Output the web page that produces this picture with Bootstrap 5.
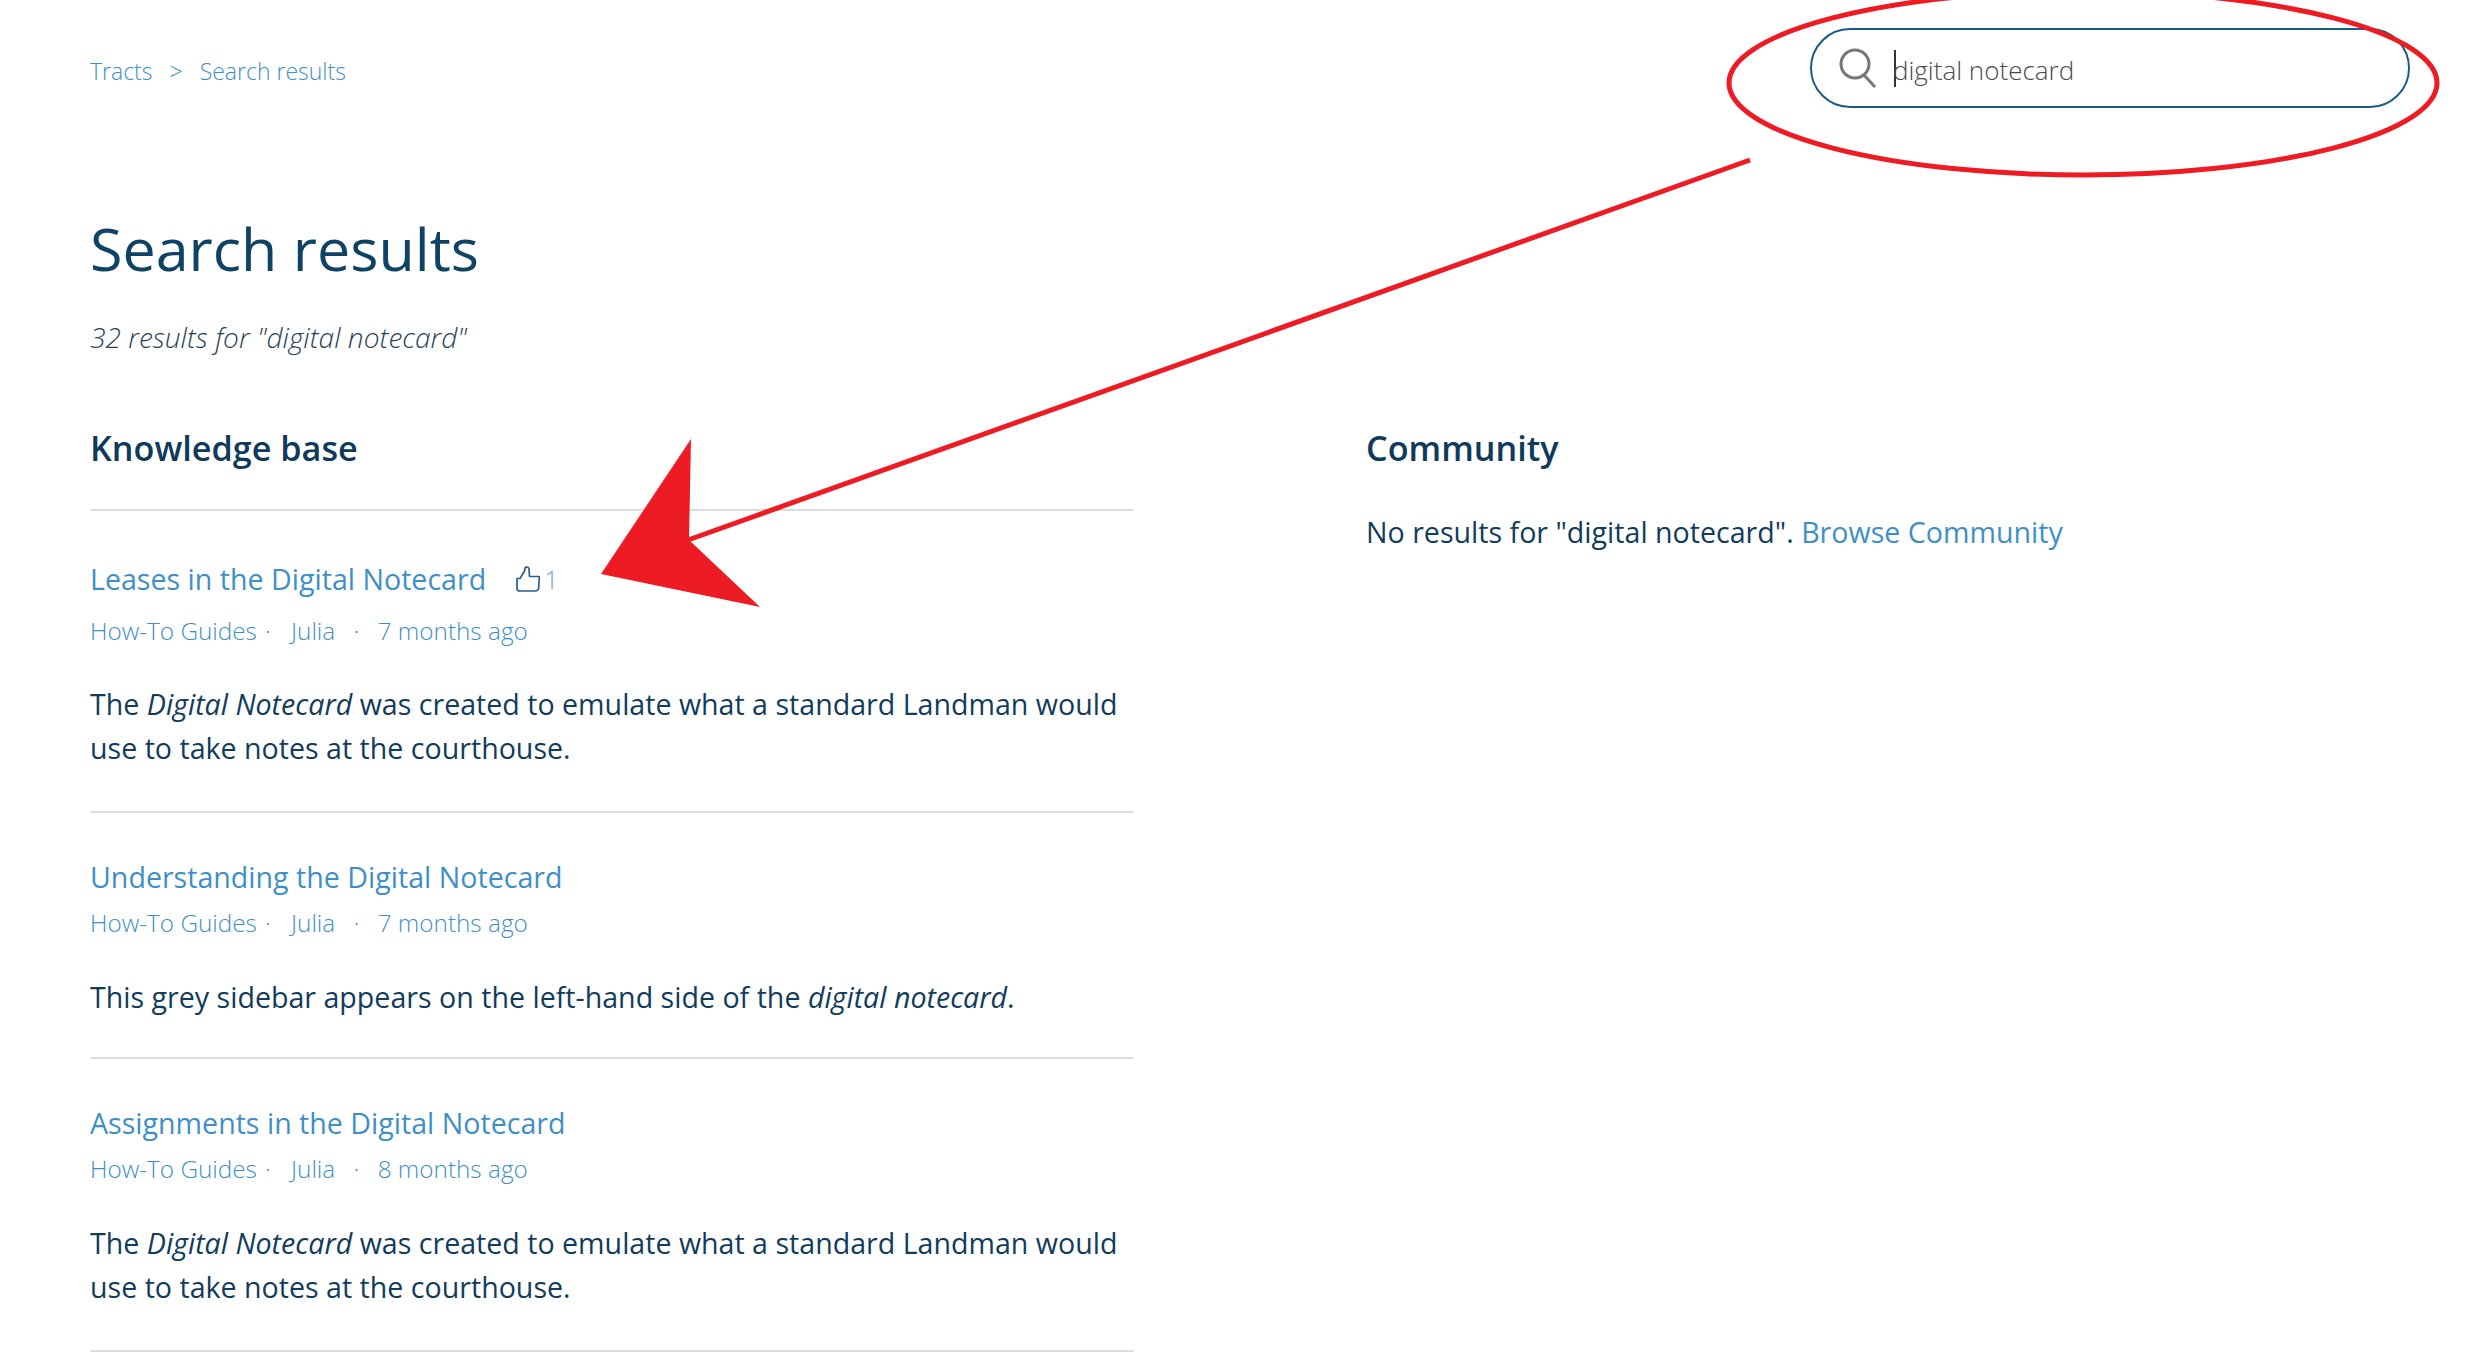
<!DOCTYPE html>
<html lang="en">
<head>
  <meta charset="UTF-8">
  <meta name="viewport" content="width=device-width, initial-scale=1">
  <title>Search results</title>
  <link href="https://cdn.jsdelivr.net/npm/bootstrap@5.3.0/dist/css/bootstrap.min.css" rel="stylesheet">
  <style>
    body {
      font-family: "Open Sans", "Liberation Sans", sans-serif;
      font-size: 28.6px;
      line-height: 44px;
      color: #123c5c;
      background: #fff;
      height: 1372px;
      overflow: hidden;
    }
    a { color: #3f8fc7; text-decoration: none; }
    .page-wrap { padding: 28px 73px 0 90px; }
    .crumbs { font-size: 23px; font-weight: 300; height: 79px; gap: 17px; padding-top: 6px; }
    .search-box {
      width: 600px;
      height: 80px;
      border: 2px solid #1b5a85;
      padding-left: 27px;
    }
    .search-box svg { flex: none; }
    .search-box .form-control {
      font-size: 26px;
      font-weight: 300;
      color: #4a4a4a;
      padding: 5px 0 0;
      margin-left: -3px;
      box-shadow: none;
    }
    .text-caret { width: 2px; height: 37px; background: #333; margin-left: 17px; flex: none; }
    .page-title { font-size: 59.2px; font-weight: 400; line-height: 80px; color: #0f4365; margin: 100px 0 0; }
    .sub-title { font-size: 28.1px; font-weight: 300; font-style: italic; margin: 27px 0 0; line-height: 44px; color: #2a4358; }
    .cols { margin-top: 67px; gap: 232px; }
    .col-left { width: 1044px; flex: none; }
    .sec-title { font-size: 34.2px; font-weight: 600; line-height: 44px; color: #0f3a59; margin: 0; }
    .result-row { border-top: 2px solid #dcdcdc; }
    .result-row.first { margin-top: 39px; padding-top: 46px; height: 302px; }
    .result-row.short { padding-top: 42px; height: 246px; }
    .result-row.tall { padding-top: 42px; height: 293px; }
    .result-name { font-size: 28.6px; line-height: 44px; }
    .result-meta { font-size: 24.3px; font-weight: 300; line-height: 40px; margin: 0; }
    .result-row.first .result-meta { margin: 10px 0 31px; }
    .result-row.short .result-meta, .result-row.tall .result-meta { margin: 4px 0 32px; }
    .result-text { margin: 0; }
    .dot-a { margin: 0 14px 0 8px; }
    .dot-b { margin: 0 12px 0 12px; }
    .likes { font-size: 25px; font-weight: 300; color: #6fa3cf; margin-left: 30px; gap: 4px; }
    .community-line { margin: 40px 0 0; }
    .markup { position: absolute; left: 0; top: 0; pointer-events: none; }
  </style>
</head>
<body class="position-relative">
  <div class="page-wrap">
    <div class="d-flex justify-content-between align-items-center">
      <div class="crumbs d-flex align-items-center">
        <a href="#">Tracts</a><a href="#">&gt;</a><a href="#">Search results</a>
      </div>
      <div class="search-box d-flex align-items-center rounded-pill">
        <svg width="38" height="40" viewBox="0 0 38 40" fill="none" stroke="#777" stroke-width="3">
          <circle cx="16" cy="16" r="14"/>
          <path d="M25 27 L36 39"/>
        </svg>
        <span class="text-caret"></span>
        <input class="form-control border-0 bg-transparent" type="text" value="digital notecard">
      </div>
    </div>

    <h1 class="page-title">Search results</h1>
    <p class="sub-title">32 results for "digital notecard"</p>

    <div class="cols d-flex">
      <div class="col-left">
        <h2 class="sec-title">Knowledge base</h2>

        <div class="result-row first">
          <div class="d-flex align-items-center">
            <a class="result-name" href="#">Leases in the Digital Notecard</a>
            <span class="likes d-flex align-items-center">
              <svg width="24" height="26" viewBox="0 0 24 26" fill="none" stroke="#2b5f8a" stroke-width="1.7" stroke-linejoin="round">
                <path d="M1 12.5 H4 L8.5 5 L9 2 C9.5 0.8 12.5 0.8 13 2.5 L13.5 10.5 H22.5 C23.2 10.5 23.3 11 23.2 12 L22.7 22 C22.5 24 21 25 19 25 H3.5 C2 25 1 24 1 22.5 Z"/>
              </svg>
              1
            </span>
          </div>
          <p class="result-meta"><a href="#">How-To Guides</a><span class="dot-a"><a href="#">·</a></span> <a href="#">Julia</a> <span class="dot-b"><a href="#">·</a></span> <a href="#">7 months ago</a></p>
          <p class="result-text">The <em>Digital Notecard</em> was created to emulate what a standard Landman would use to take notes at the courthouse.</p>
        </div>

        <div class="result-row short">
          <a class="result-name" href="#">Understanding the Digital Notecard</a>
          <p class="result-meta"><a href="#">How-To Guides</a><span class="dot-a"><a href="#">·</a></span> <a href="#">Julia</a> <span class="dot-b"><a href="#">·</a></span> <a href="#">7 months ago</a></p>
          <p class="result-text">This grey sidebar appears on the left-hand side of the <em>digital notecard</em>.</p>
        </div>

        <div class="result-row tall">
          <a class="result-name" href="#">Assignments in the Digital Notecard</a>
          <p class="result-meta"><a href="#">How-To Guides</a><span class="dot-a"><a href="#">·</a></span> <a href="#">Julia</a> <span class="dot-b"><a href="#">·</a></span> <a href="#">8 months ago</a></p>
          <p class="result-text">The <em>Digital Notecard</em> was created to emulate what a standard Landman would use to take notes at the courthouse.</p>
        </div>

        <div class="result-row"></div>
      </div>

      <div class="flex-grow-1">
        <h2 class="sec-title">Community</h2>
        <p class="community-line">No results for "digital notecard". <a href="#">Browse Community</a></p>
      </div>
    </div>
  </div>

  <!-- red annotation drawn on top of the screenshot -->
  <svg class="markup" width="2483" height="1372" viewBox="0 0 2483 1372" fill="none">
    <ellipse cx="2083" cy="83" rx="354" ry="92" stroke="#ed1c24" stroke-width="5"/>
    <path d="M1750 160 L688 540" stroke="#ed1c24" stroke-width="5"/>
    <path d="M691 439 L601 574 L760 607 L689 540 Z" fill="#ed1c24"/>
  </svg>

  <script src="https://cdn.jsdelivr.net/npm/bootstrap@5.3.0/dist/js/bootstrap.bundle.min.js"></script>
</body>
</html>
